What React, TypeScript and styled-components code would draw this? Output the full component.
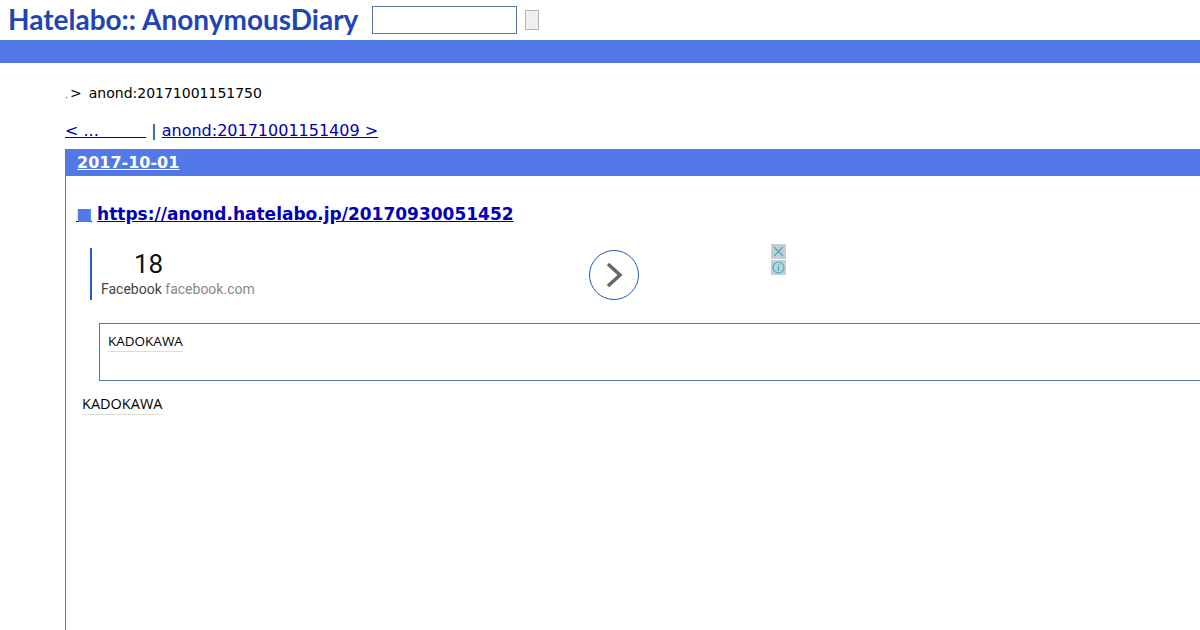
import React from "react";
import styled, { createGlobalStyle } from "styled-components";

const GlobalStyle = createGlobalStyle`
  html, body {
    margin: 0;
    padding: 0;
    height: 630px;
    overflow: hidden;
    background: #fff;
    font-family: "DejaVu Sans", sans-serif;
  }
`;

const Header = styled.header`
  height: 40px;
  display: flex;
  align-items: center;
  padding-left: 8px;
`;

const Logo = styled.h1`
  margin: -3px 14px 0 0;
  width: 350px;
  font-family: "Lato", sans-serif;
  font-size: 28px;
  font-weight: 700;
  line-height: 40px;
  color: #1f45b5;
  white-space: nowrap;
`;

const LogoWord = styled.span`
  margin-left: 6px;
`;

const SearchInput = styled.input`
  box-sizing: border-box;
  width: 145px;
  height: 28px;
  margin: 0 8px 0 0;
  padding: 0;
  background: #fff;
  border: 1px solid #5b7aa8;
`;

const SearchButton = styled.button`
  box-sizing: border-box;
  width: 14px;
  height: 20px;
  padding: 0;
  background: #efefef;
  border: 1px solid #b5b5b5;
`;

const Band = styled.div`
  height: 23px;
  background: #5279e7;
`;

const Main = styled.main`
  padding-left: 65px;
`;

const Breadcrumb = styled.div`
  display: flex;
  align-items: baseline;
  height: 20px;
  margin-top: 20px;
  font-size: 14px;
  line-height: 20px;
  color: #000;
`;

const Dot = styled.span`
  width: 5px;
  font-size: 8px;
`;

const Crumb = styled.span`
  margin-left: 7px;
`;

const Pager = styled.div`
  height: 20px;
  margin-top: 18px;
  font-size: 16px;
  line-height: 20px;
  color: #222;
`;

const PagerLink = styled.a`
  color: #0000b5;
  text-decoration: underline;
  white-space: pre;
`;

const Day = styled.section`
  width: 1300px;
  height: 490px;
  margin-top: 8px;
  border-left: 1px solid #5b7aa8;
`;

const DayTitle = styled.h2`
  margin: 0;
  height: 27px;
  padding-left: 11px;
  background: #5279e7;
  font-size: 16px;
  font-weight: 700;
  line-height: 27px;
  color: #fff;
`;

const DayLink = styled.a`
  color: #fff;
  text-decoration: underline;
`;

const EntryTitle = styled.h3`
  display: flex;
  align-items: baseline;
  gap: 5px;
  margin: 27px 0 0 10px;
  height: 22px;
  font-size: 17px;
  font-weight: 700;
  line-height: 22px;
`;

const Square = styled.a`
  font-size: 17px;
  font-weight: 400;
  color: #5279e7;
  text-decoration: underline;
  text-decoration-color: #0000b5;
`;

const EntryLink = styled.a`
  color: #0000b5;
  text-decoration: underline;
`;

const Ad = styled.div`
  display: flex;
  width: 696px;
  height: 52px;
  margin: 23px 0 0 24px;
  position: relative;
`;

const AdText = styled.div`
  width: 488px;
  padding-left: 9px;
  border-left: 2px solid #1f5bc4;
  font-family: "Roboto", sans-serif;
`;

const AdCount = styled.div`
  height: 30px;
  padding-left: 33px;
  font-size: 26px;
  line-height: 32px;
  color: #111;
`;

const AdSource = styled.div`
  margin-top: 2px;
  font-size: 14px;
  line-height: 18px;
  color: #444;
`;

const AdDomain = styled.span`
  color: #888;
`;

const AdArrow = styled.div`
  box-sizing: border-box;
  width: 50px;
  height: 50px;
  margin-top: 2px;
  display: flex;
  align-items: center;
  justify-content: center;
  border: 1px solid #1f5bab;
  border-radius: 50%;
`;

const AdControls = styled.div`
  position: absolute;
  top: -4px;
  right: 0;
  display: flex;
  flex-direction: column;
  gap: 1px;
`;

const AdControl = styled.div`
  width: 15px;
  height: 15px;
  display: flex;
  align-items: center;
  justify-content: center;
  background: #c8cdd0;
`;

const Quote = styled.blockquote`
  box-sizing: border-box;
  width: 1200px;
  height: 58px;
  margin: 23px 0 0 33px;
  padding: 7px 8px;
  border: 1px solid #5b7aa8;
`;

const Keyword = styled.a<{ $size: number }>`
  display: inline-block;
  font-family: "Open Sans", sans-serif;
  font-size: ${(p) => p.$size}px;
  line-height: ${(p) => p.$size + 4}px;
  color: #000;
  text-decoration: none;
  border-bottom: 1px solid #dcdcdc;
`;

const Footnote = styled.p`
  margin: 13px 0 0 16px;
  line-height: 20px;
`;

export default function App() {
  return (
    <>
      <GlobalStyle />
      <Header>
        <Logo>
          Hatelabo::<LogoWord>AnonymousDiary</LogoWord>
        </Logo>
        <SearchInput />
        <SearchButton />
      </Header>
      <Band />
      <Main>
        <Breadcrumb>
          <Dot>.</Dot>
          <span>&gt;</span>
          <Crumb>anond:20171001151750</Crumb>
        </Breadcrumb>
        <Pager>
          <PagerLink href="#">{"< ...         \u200A"}</PagerLink> |{" "}
          <PagerLink href="#">anond:20171001151409 &gt;</PagerLink>
        </Pager>
        <Day>
          <DayTitle>
            <DayLink href="#">2017-10-01</DayLink>
          </DayTitle>
          <EntryTitle>
            <Square href="#">■</Square>
            <EntryLink href="#">https://anond.hatelabo.jp/20170930051452</EntryLink>
          </EntryTitle>
          <Ad>
            <AdText>
              <AdCount>18</AdCount>
              <AdSource>
                Facebook <AdDomain>facebook.com</AdDomain>
              </AdSource>
            </AdText>
            <AdArrow>
              <svg width="18" height="26" viewBox="0 0 18 26" fill="none" stroke="#666" strokeWidth="3.5">
                <path d="M3 2 L15 13 L3 24" />
              </svg>
            </AdArrow>
            <AdControls>
              <AdControl>
                <svg width="11" height="11" viewBox="0 0 11 11" fill="none" stroke="#2fb4d0" strokeWidth="1.2">
                  <path d="M1 1 L10 10 M10 1 L1 10" />
                </svg>
              </AdControl>
              <AdControl>
                <svg width="13" height="13" viewBox="0 0 13 13" fill="none" stroke="#2fb4d0" strokeWidth="1.2">
                  <circle cx="6.5" cy="6.5" r="5.5" />
                  <path d="M6.5 5.5 V10 M6.5 3 V4.2" />
                </svg>
              </AdControl>
            </AdControls>
          </Ad>
          <Quote>
            <Keyword $size={13.5} href="#">KADOKAWA</Keyword>
          </Quote>
          <Footnote>
            <Keyword $size={14.5} href="#">KADOKAWA</Keyword>
          </Footnote>
        </Day>
      </Main>
    </>
  );
}
